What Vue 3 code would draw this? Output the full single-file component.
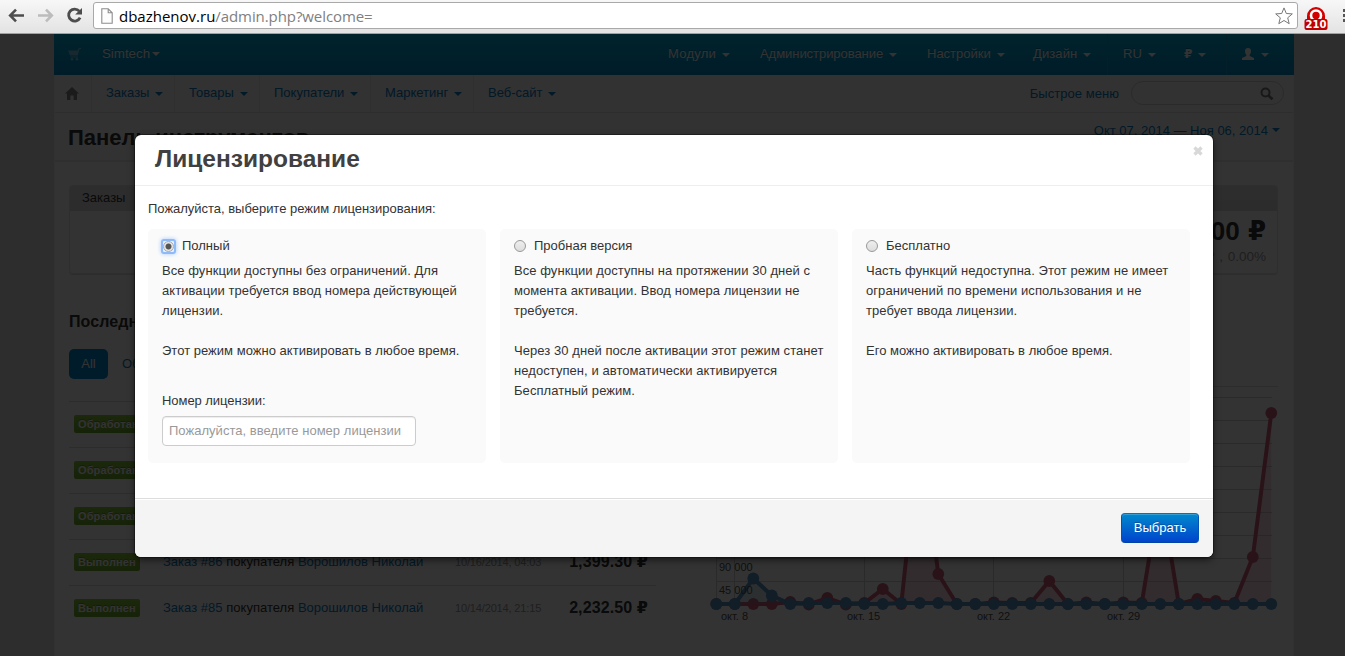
<script setup>
const topMenu = ['Модули', 'Администрирование', 'Настройки', 'Дизайн']
const subMenu = [
  { t: 'Заказы', c: 'm1' }, { t: 'Товары', c: 'm2' }, { t: 'Покупатели', c: 'm3' },
  { t: 'Маркетинг', c: 'm4' }, { t: 'Веб-сайт', c: 'm5' }
]
const orders = [
  { s: 'Обработан', n: 89 },
  { s: 'Обработан', n: 88 },
  { s: 'Обработан', n: 87 },
  { s: 'Выполнен', n: 86, d: '10/16/2014, 04:03', p: '1,399.30' },
  { s: 'Выполнен', n: 85, d: '10/14/2014, 21:15', p: '2,232.50' }
]
const red = [604, 604, 604, 604, 602, 604.5, 598, 604.5, 603, 589, 604, 430, 574, 604, 604, 602.5, 603, 603, 581, 604, 602.5, 604, 602.5, 603, 490, 604, 599, 601, 603, 557, 413]
const blue = [604, 604, 578.5, 595.5, 604, 603, 603, 603, 604, 604, 603, 603, 603, 604, 604, 604, 604, 604, 604, 604, 604, 604, 604, 604, 604, 604, 604, 604, 604, 604, 604]
const pts = a => a.map((y, i) => ({ x: 16.3 + i * 18.5, y: y - 387 }))
const line = a => pts(a).map(p => `${p.x},${p.y}`).join(' ')
const area = a => `16.3,217 ${line(a)} 571.3,217`
</script>

<template>
  <div class="screen">
    <header class="chrome">
      <svg class="nav-icons" width="92" height="33" viewBox="0 0 92 33" fill="none">
        <path d="M24 15.5H10.5M16 9.7l-5.8 5.8 5.8 5.8" stroke="#4d4d4d" stroke-width="2.6" />
        <path d="M38 15.5h13.5M46 9.7l5.8 5.8-5.8 5.8" stroke="#bcbcbc" stroke-width="2.6" />
        <path d="M79.3 11.2a6 6 0 1 0 .8 6.4" stroke="#4d4d4d" stroke-width="2.8" />
        <path d="M82 8v6.6h-6.8z" fill="#4d4d4d" />
      </svg>
      <div class="address">
        <svg width="12" height="16" viewBox="0 0 12 16"><path d="M.8.8h6.4l4 4v10.4H.8zM7.2.8v4h4" fill="#fdfdfd" stroke="#8d8d8d" stroke-width="1.1" /></svg>
        <span class="url"><b>dbazhenov.ru</b>/admin.php?welcome=</span>
        <svg class="star" width="18" height="18" viewBox="0 0 18 18"><path d="M9 .9l2.3 5.6 6 .4-4.6 3.9 1.5 5.9L9 13.5l-5.2 3.2 1.5-5.9L.7 6.9l6-.4z" fill="#fff" stroke="#777" stroke-linejoin="round" /></svg>
      </div>
      <div class="ext">
        <svg width="24" height="25" viewBox="0 0 24 25">
          <path d="M3 14V10a9 9 0 0 1 18 0v4z" fill="#d40000" />
          <circle cx="12" cy="9.5" r="5" fill="none" stroke="#fff" stroke-width="2.6" />
          <rect x=".5" y="13" width="23" height="11" rx="2" fill="#c00000" />
          <text x="12" y="22" text-anchor="middle" class="badge">210</text>
        </svg>
      </div>
      <i class="menu-dots"></i>
    </header>

    <main class="viewport">
      <div class="page">
        <nav class="topbar">
          <svg class="cart" width="14" height="13" viewBox="0 0 14 13"><path d="M0 2.500h9.700L10.800 0H13v1h-1.500L9.800 7.500H2zM2.500 8.500h7.500v1H2.500z" fill="currentColor" /><circle cx="4" cy="11.300" r="1.300" fill="currentColor" /><circle cx="9" cy="11.300" r="1.300" fill="currentColor" /></svg>
          <span class="brand">Simtech<i class="caret"></i></span>
          <div class="topmenu">
            <span v-for="(m, i) in topMenu" :key="m" :class="'t' + i">{{ m }}<i class="caret"></i></span>
          </div>
          <span class="cell ru">RU<i class="caret"></i></span>
          <span class="cur"><span class="rub">₽</span><i class="caret"></i></span>
          <span class="cell user"><svg width="12" height="12" viewBox="0 0 12 12"><path d="M6 0c2 0 3 1.2 3 3.2C9 5 8.2 6 7.7 6.7v1.2L12 10v2H0v-2l4.3-2.1V6.7C3.8 6 3 5 3 3.200 3 1.200 4 0 6 0z" fill="currentColor" /></svg><i class="caret"></i></span>
        </nav>
        <nav class="subbar">
          <span class="home"><svg width="14" height="13" viewBox="0 0 14 13"><path d="M7 0l7 6.500h-2V13H8.600V8.500H5.400V13H2V6.500H0z" fill="#888" /></svg></span>
          <span v-for="m in subMenu" :key="m.t" class="sub" :class="m.c">{{ m.t }}<i class="caret"></i></span>
          <span class="quick">Быстрое меню</span>
          <span class="search"><svg width="14" height="14" viewBox="0 0 14 14" fill="none" stroke="#777" stroke-width="2"><circle cx="5.500" cy="5.500" r="4" /><path d="M8.500 8.500l4 3.800" stroke-width="2.600" /></svg></span>
        </nav>
        <div class="titlebar">
          <h1>Панель инструментов</h1>
          <span class="dates">Окт 07, 2014 — Ноя 06, 2014<i class="caret"></i></span>
        </div>
        <section class="stats">
          <div class="stats-head">Заказы</div>
          <div class="stats-body"><strong>0.00 <span class="rub">₽</span></strong><small>0.00 <span class="rub">₽</span> , 0.00%</small></div>
        </section>
        <div class="columns">
          <section class="recent">
            <h2>Последние</h2>
            <div class="tabs"><span class="pill">All</span><span class="tab">Обработан</span></div>
            <div v-for="o in orders" :key="o.n" class="order">
              <span class="status">{{ o.s }}</span>
              <template v-if="o.d">
                <span class="desc"><a>Заказ #{{ o.n }}</a> покупателя <a>Ворошилов Николай</a></span>
                <span class="when">{{ o.d }}</span>
                <span class="price">{{ o.p }} <span class="rub">₽</span></span>
              </template>
            </div>
          </section>
          <section class="chart">
            <svg width="579" height="268" viewBox="0 0 579 268">
              <g stroke="#d0d0d0" stroke-width="1">
                <path v-for="k in 10" :key="k" :d="`M16 ${k * 23 - 12.500}H572`" />
                <path v-for="x in [16.5, 34.5, 164.5, 293.5, 423.5]" :key="x" :d="`M${x} 10V222`" />
              </g>
              <polygon :points="area(red)" fill="#d96680" fill-opacity=".22" />
              <polyline :points="line(red)" fill="none" class="red" />
              <circle v-for="(p, i) in pts(red)" :key="'r' + i" :cx="p.x" :cy="p.y" r="5.900" class="rdot" />
              <polygon :points="area(blue)" fill="#6496c0" fill-opacity=".22" />
              <polyline :points="line(blue)" fill="none" class="blue" />
              <circle v-for="(p, i) in pts(blue)" :key="'b' + i" :cx="p.x" :cy="p.y" r="5.900" class="bdot" />
              <text x="19" y="184">90 000</text><text x="19" y="207">45 000</text>
              <text x="21" y="233">окт. 8</text><text x="147" y="233">окт. 15</text><text x="277" y="233">окт. 22</text><text x="407" y="233">окт. 29</text>
            </svg>
          </section>
        </div>
      </div>
      <div class="backdrop"></div>
    </main>

    <div class="modal">
      <div class="modal-head"><h3>Лицензирование</h3>
        <svg width="10" height="10" viewBox="0 0 10 10"><path d="M1.500 1.500l7 7m0-7l-7 7" stroke="#d8d8d8" stroke-width="3.300" /></svg>
      </div>
      <div class="modal-body">
        <p class="lead">Пожалуйста, выберите режим лицензирования:</p>
        <div class="cards">
          <div class="card">
            <label><i class="focus"><i class="radio on"></i></i>Полный</label>
            <p>Все функции доступны без ограничений. Для<br>активации требуется ввод номера действующей<br>лицензии.</p>
            <p class="tight">Этот режим можно активировать в любое время.</p>
            <div class="field"><span>Номер лицензии:</span><input type="text" placeholder="Пожалуйста, введите номер лицензии"></div>
          </div>
          <div class="card">
            <label><i class="radio"></i>Пробная версия</label>
            <p>Все функции доступны на протяжении 30 дней с<br>момента активации. Ввод номера лицензии не<br>требуется.</p>
            <p>Через 30 дней после активации этот режим станет<br>недоступен, и автоматически активируется<br>Бесплатный режим.</p>
          </div>
          <div class="card">
            <label><i class="radio"></i>Бесплатно</label>
            <p>Часть функций недоступна. Этот режим не имеет<br>ограничений по времени использования и не<br>требует ввода лицензии.</p>
            <p class="tight">Его можно активировать в любое время.</p>
          </div>
        </div>
      </div>
      <div class="modal-foot"><button>Выбрать</button></div>
    </div>
  </div>
</template>

<style>
body { overflow: hidden; }
</style>
<style scoped>
* { box-sizing: border-box; }
.screen { position: relative; width: 1345px; height: 656px; overflow: hidden; font: 13px/20px "Liberation Sans", Arial, sans-serif; color: #333; }
.chrome { height: 34px; display: flex; background: linear-gradient(#f7f7f7, #e3e3e3); border-bottom: 1px solid #9fa3a0; overflow: hidden; }
.nav-icons { flex: none; margin-right: 1px; }
.address { width: 1205px; height: 27px; margin-top: 2px; flex: none; border: 1px solid #a9a9a9; border-radius: 3px; background: #fff; display: flex; align-items: center; padding: 0 4px 0 7px; }
.url { flex: 1; margin-left: 6px; font: 15px/24px "Open Sans", sans-serif; letter-spacing: -.08px; color: #808080; white-space: nowrap; }
.url b { font-weight: 400; color: #000; letter-spacing: 0; }
.ext { width: 24px; margin: 6px 0 0 6px; flex: none; }
.badge { font: bold 10px "DejaVu Sans", sans-serif; fill: #fff; }
.menu-dots { width: 4px; height: 14px; margin: 9px 0 0 15px; flex: none; background: repeating-linear-gradient(#555 0 3px, transparent 3px 5px); }
.viewport { position: relative; height: 622px; background: #e1e1e1; }
.page { width: 1240px; height: 622px; margin-left: 54px; background: #fff; border-left: 1px solid #f4f4f4; border-right: 1px solid #f4f4f4; }
.backdrop { position: absolute; inset: 0; background: rgba(0, 0, 0, .8); }
.caret { display: inline-block; width: 0; height: 0; border: 4px solid transparent; border-top-color: currentColor; border-bottom: 0; margin-left: 6px; vertical-align: middle; }
.topbar { height: 41px; margin: 0 -1px; display: flex; line-height: 39px; color: #fff; background: linear-gradient(#00b0dc, #008cc8); white-space: nowrap; text-shadow: 0 -1px 0 rgba(0, 0, 0, .25); }
.cart { margin: 14px 20px 0 14px; opacity: .45; flex: none; }
.brand { width: 566px; font-size: 13.3px; line-height: 40px; flex: none; }
.brand .caret { margin-left: 2px; }
.topmenu { width: 439px; display: flex; flex: none; letter-spacing: .1px; }
.topmenu span { flex: none; }
.t0 { width: 92px; letter-spacing: .25px; }
.t1 { width: 167px; letter-spacing: -.05px; }
.t2 { width: 106px; letter-spacing: 0; }
.cell { border-left: 1px solid #1a9ccb; flex: none; }
.ru { width: 77px; padding-left: 15px; font-size: 13px; }
.cur { width: 42px; flex: none; }
.cur .rub { font-size: 12px; font-weight: 700; }
.cur .caret { margin-left: 6px; }
.user { width: 67px; padding-left: 15px; }
.user svg { vertical-align: -2px; }
.user .caret { margin-left: 7px; }
.subbar { height: 38px; display: flex; color: #0a7cc4; background: #f7f7f7; border-bottom: 1px solid #e2e2e2; line-height: 36px; white-space: nowrap; }
.home { width: 37px; padding: 12px 0 0 10px; line-height: 0; border-right: 1px solid #e8e8e8; flex: none; }
.sub { border-right: 1px solid #e8e8e8; padding-left: 14px; flex: none; }
.m1 { width: 83px; }
.m2 { width: 85px; }
.m3 { width: 111px; }
.m4 { width: 103px; }
.m5 { width: 100px; border: 0; }
.quick { margin-left: auto; margin-right: 12px; letter-spacing: .05px; line-height: 37px; }
.search { width: 153px; height: 24px; margin: 6px 9px 0 0; border: 1px solid #d3d3d3; border-radius: 12px; padding: 5px 9px; text-align: right; line-height: 0; background: #fafafa; }
.titlebar { height: 49px; display: flex; justify-content: space-between; border-bottom: 2px solid #ececec; background: #fbfbfb; padding: 0 13px; }
h1 { margin: 0; font-size: 22px; line-height: 49px; }
.dates { color: #0a7cc4; line-height: 36px; }
.dates .caret { margin-left: 4px; vertical-align: 3px; }
.stats { margin: 23px 15px 0 14px; height: 89px; border: 1px solid #e6e6e6; border-radius: 4px; box-shadow: 0 1px 1px #ddd; }
.stats-head { height: 25px; padding-left: 12px; line-height: 23px; background: linear-gradient(#e3e3e3, #d9d9d9); }
.stats-body { display: flex; flex-direction: column; align-items: flex-end; padding-right: 11px; }
.stats-body strong { font-size: 26px; line-height: 40px; word-spacing: 1px; }
.stats-body small { font-size: 13.5px; line-height: 12px; color: #999; word-spacing: 1px; }
.columns { display: flex; margin-top: 35px; padding-left: 14px; }
.recent { width: 587px; flex: none; }
h2 { margin: 0; font-size: 16px; line-height: 25px; letter-spacing: .1px; }
.tabs { margin-top: 15px; height: 52px; display: flex; }
.pill { width: 39px; height: 30px; border-radius: 5px; background: #08c; color: #fff; text-align: center; line-height: 29px; }
.tab { margin-left: 14px; color: #0a7cc4; line-height: 29px; }
.order { height: 46px; border-top: 1px solid #dcdcdc; display: flex; align-items: center; padding: 0 0 1px 5px; white-space: nowrap; }
.status { height: 18px; min-width: 66px; padding: 0 4px; border-radius: 2px; background: linear-gradient(#8cc83c, #6fac28); color: #fff; font: bold 11px/18px "Liberation Sans", sans-serif; letter-spacing: .12px; text-shadow: 0 -1px 0 rgba(0, 0, 0, .25); }
.desc { margin-left: 23px; width: 292px; letter-spacing: .02px; }
.desc a { color: #0a7cc4; }
.when { font-size: 11px; color: #999; flex: 1; letter-spacing: -.15px; }
.price { font-size: 16px; font-weight: 700; line-height: 22px; letter-spacing: .1px; margin-right: 8px; }
.rub { font-family: "DejaVu Sans", sans-serif; font-weight: 700; font-size: 1em; line-height: 1; }
small .rub { font-weight: 400; font-size: 12px; }
.chart { margin: 77px 0 0 44px; width: 564px; height: 269px; border-top: 1px solid #dcdcdc; flex: none; }
.chart svg { display: block; overflow: visible; }
.chart text { font: 11px "Liberation Sans", sans-serif; fill: #545454; }
.red { stroke: #d05f78; stroke-width: 4px; }
.rdot { fill: #d05f78; }
.blue { stroke: #558fc4; stroke-width: 4px; }
.bdot { fill: #558fc4; }
.chart { margin-left: 44px; width: 578px; }
.modal { position: absolute; left: 135px; top: 135px; width: 1078px; height: 422px; background: #fff; border-radius: 6px; box-shadow: 0 3px 7px rgba(0, 0, 0, .55), 0 0 0 1px rgba(0, 0, 0, .3); overflow: hidden; display: flex; flex-direction: column; }
.modal-head { height: 51px; border-bottom: 1px solid #eee; display: flex; justify-content: space-between; padding: 0 10px 0 20px; }
.modal-head svg { margin-top: 11px; }
h3 { margin: 0; font-size: 24.5px; line-height: 48px; color: #404040; }
.modal-body { height: 312px; padding: 13px 13px 0; white-space: nowrap; }
.lead { margin: 0 0 10px; letter-spacing: -.02px; }
.cards { display: grid; grid-template-columns: repeat(3, 338px); gap: 14px; }
.card { height: 234px; border-radius: 5px; background: #fafafa; padding: 7px 14px; }
.card label { display: flex; align-items: center; height: 20px; margin-bottom: 5px; }
.card p { margin: 0 0 20px; letter-spacing: .06px; }
.card .tight { letter-spacing: .02px; }
.radio { width: 12px; height: 12px; flex: none; border: 1px solid #999; border-radius: 50%; background: linear-gradient(#eee, #ddd); margin: 0 8px 0 0; }
.focus { width: 15px; height: 15px; margin: 0 6px 0 -1px; border: 2px solid #8fbaf8; border-radius: 3px; box-shadow: 0 0 4px #a5caff; display: flex; align-items: center; justify-content: center; background: #e9eefa; }
.radio.on { width: 11px; height: 11px; margin: 0; background: radial-gradient(circle, #555 0 2.600px, #e5e5e5 3.400px); border-color: #aaa; }
.field { margin-top: 30px; display: flex; flex-direction: column; letter-spacing: -.05px; }
input { width: 254px; height: 30px; margin-top: 5px; padding: 3px 6px 4px; border: 1px solid #ccc; border-radius: 4px; font: 13px "Liberation Sans", sans-serif; letter-spacing: .03px; box-shadow: inset 0 1px 1px rgba(0, 0, 0, .075); }
input::placeholder { color: #999; opacity: 1; }
.modal-foot { flex: 1; border-top: 1px solid #ddd; box-shadow: inset 0 1px 0 #fff; background: #f4f4f4; padding: 14px 14px 0; display: flex; justify-content: flex-end; }
button { width: 78px; height: 30px; border: 1px solid #0052b5; border-color: #0076b5 #0052b5 #0044a8; border-radius: 4px; background: linear-gradient(#08c, #04c); color: #fff; font: 13px "Liberation Sans", sans-serif; padding: 0 0 2px; text-shadow: 0 -1px 0 rgba(0, 0, 0, .25); box-shadow: inset 0 1px 0 rgba(255, 255, 255, .2); }
</style>
